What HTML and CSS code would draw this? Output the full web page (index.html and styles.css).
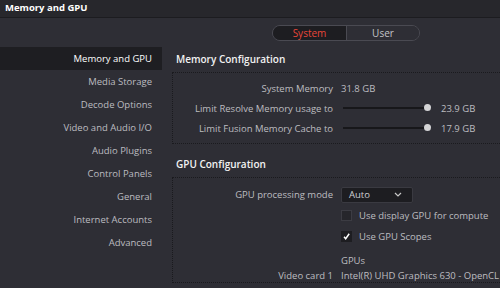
FILE: index.html
```html
<!DOCTYPE html>
<html>
<head>
<meta charset="utf-8">
<link rel="stylesheet" href="styles.css">
</head>
<body>
<div class="app">
  <header class="titlebar">Memory and GPU</header>
  <div class="toggle-row">
    <div class="toggle">
      <span class="seg seg-on">System</span>
      <span class="seg">User</span>
    </div>
  </div>
  <div class="main">
    <nav class="sidebar">
      <div class="nav-item active">Memory and GPU</div>
      <div class="nav-item">Media Storage</div>
      <div class="nav-item">Decode Options</div>
      <div class="nav-item">Video and Audio I/O</div>
      <div class="nav-item">Audio Plugins</div>
      <div class="nav-item">Control Panels</div>
      <div class="nav-item">General</div>
      <div class="nav-item">Internet Accounts</div>
      <div class="nav-item">Advanced</div>
    </nav>
    <section class="content">
      <h2 class="heading">Memory Configuration</h2>
      <div class="box box-mem">
        <div class="row">
          <div class="label">System Memory</div>
          <div class="value">31.8 GB</div>
        </div>
        <div class="row">
          <div class="label">Limit Resolve Memory usage to</div>
          <div class="value slider-value">
            <div class="slider"><div class="track"></div><div class="knob"></div></div>
            <span>23.9 GB</span>
          </div>
        </div>
        <div class="row">
          <div class="label">Limit Fusion Memory Cache to</div>
          <div class="value slider-value">
            <div class="slider"><div class="track"></div><div class="knob"></div></div>
            <span>17.9 GB</span>
          </div>
        </div>
      </div>
      <h2 class="heading heading-gpu">GPU Configuration</h2>
      <div class="box box-gpu">
        <div class="row">
          <div class="label">GPU processing mode</div>
          <div class="value">
            <div class="dropdown"><span>Auto</span>
              <svg class="chev" width="8" height="5" viewBox="0 0 8 5"><path d="M1 1 L4 4 L7 1" fill="none" stroke="#c8c8c8" stroke-width="1.2"/></svg>
            </div>
          </div>
        </div>
        <div class="row">
          <div class="label"></div>
          <div class="value check-value"><span class="checkbox"></span><span>Use display GPU for compute</span></div>
        </div>
        <div class="row">
          <div class="label"></div>
          <div class="value check-value"><span class="checkbox checked"><svg width="11" height="11" viewBox="0 0 11 11"><path d="M2.5 5.8 L4.5 8.2 L8.8 2.2" fill="none" stroke="#ffffff" stroke-width="1.8"/></svg></span><span>Use GPU Scopes</span></div>
        </div>
        <div class="row row-gpus">
          <div class="label"></div>
          <div class="value">GPUs</div>
        </div>
        <div class="row row-card">
          <div class="label">Video card 1</div>
          <div class="value">Intel(R) UHD Graphics 630 - OpenCL</div>
        </div>
      </div>
    </section>
  </div>
</div>
</body>
</html>
```

FILE: styles.css
```css
html, body {
  margin: 0;
  padding: 0;
}
body {
  width: 500px;
  height: 288px;
  overflow: hidden;
  background: #2e2e35;
  font-family: "Open Sans", "Noto Sans", sans-serif;
  font-size: 9.5px;
  color: #bdbdc0;
  white-space: nowrap;
}
.app {
  width: 500px;
  height: 288px;
  display: flex;
  flex-direction: column;
}
.titlebar {
  height: 17px;
  line-height: 16px;
  padding-left: 5px;
  background: #27272c;
  border-bottom: 1px solid #1c1c20;
  color: #ffffff;
  font-weight: 700;
  font-size: 9.5px;
}
.toggle-row {
  height: 29px;
  display: flex;
  align-items: flex-start;
  padding-top: 7px;
  padding-left: 272px;
  box-sizing: border-box;
}
.toggle {
  display: flex;
  height: 16px;
  border: 1px solid #4a4a52;
  border-radius: 9px;
  overflow: hidden;
  box-sizing: border-box;
}
.seg {
  width: 72px;
  text-align: center;
  line-height: 14px;
  color: #c4c4c8;
  background: #2e2e35;
  font-size: 10px;
}
.seg-on {
  width: 73px;
  color: #e8463a;
  background: #1d1d21;
  border-right: 1px solid #4a4a52;
}
.main {
  display: flex;
  flex: 1;
}
.sidebar {
  width: 162px;
}
.nav-item {
  height: 23px;
  line-height: 23px;
  text-align: right;
  padding-right: 10px;
  color: #bcbcc0;
}
.nav-item.active {
  background: #1e1e22;
  color: #ffffff;
}
.content {
  flex: 1;
  padding-left: 10px;
  min-width: 0;
}
.heading {
  margin: 0;
  padding-left: 4px;
  height: 25px;
  line-height: 25px;
  font-size: 10px;
  font-weight: 600;
  color: #f2f2f2;
}
.heading-gpu {
  margin-top: 8px;
}
.box {
  border: 1px dotted #1a1a1e;
  border-right: none;
  padding-top: 5px;
}
.box-mem {
  height: 72px;
  box-sizing: border-box;
}
.row {
  display: grid;
  grid-template-columns: 160px 1fr;
  column-gap: 8px;
  height: 20px;
  align-items: center;
}
.label {
  text-align: right;
}
.value {
  display: flex;
  align-items: center;
}
.slider-value {
  gap: 10px;
}
.slider {
  position: relative;
  width: 90px;
  height: 8px;
}
.track {
  position: absolute;
  left: 2px;
  right: 0;
  top: 3px;
  height: 2px;
  background: #17171a;
}
.knob {
  position: absolute;
  right: 0;
  top: 0;
  width: 7px;
  height: 7px;
  border-radius: 50%;
  background: #d4d4d6;
}
.box-gpu .row {
  height: 21px;
}
.box-gpu {
  padding-top: 6px;
}
.dropdown {
  width: 72px;
  height: 16px;
  box-sizing: border-box;
  background: #1d1d21;
  border: 1px solid #3a3a41;
  border-radius: 2px;
  display: flex;
  align-items: center;
  justify-content: space-between;
  padding: 0 10px 0 7px;
  color: #d0d0d4;
}
.check-value {
  gap: 7px;
}
.checkbox {
  width: 11px;
  height: 11px;
  box-sizing: border-box;
  background: #26262b;
  border: 1px solid #3c3c43;
  display: inline-flex;
  align-items: center;
  justify-content: center;
}
.checkbox.checked {
  background: #1d1d21;
  border-color: #1d1d21;
}
.checkbox svg {
  display: block;
}
.box-gpu .row-gpus {
  margin-top: 5px;
  height: 17px;
}
.box-gpu .row-card {
  height: 13px;
}
```
